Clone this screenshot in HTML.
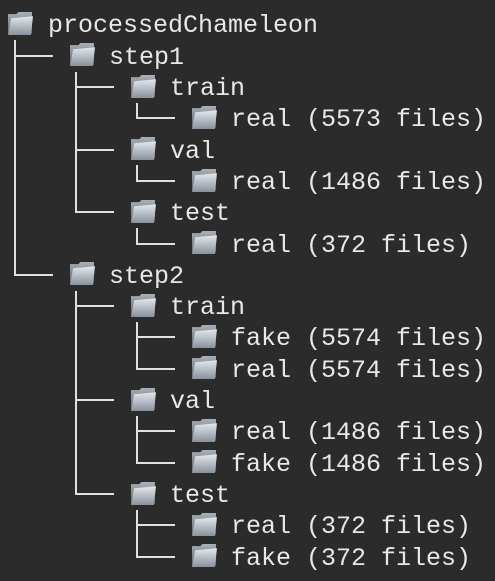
<!DOCTYPE html>
<html><head><meta charset="utf-8"><style>
html,body{margin:0;padding:0;background:#2b2b2b;width:495px;height:581px;overflow:hidden;position:relative}
.t{position:absolute;height:31px;line-height:31px;font-family:"Liberation Mono","DejaVu Sans Mono",monospace;font-size:25px;color:#e8e8e8;white-space:pre;margin-top:2px}
.i{position:absolute;width:25px;height:23px}
.v{position:absolute;width:2px;background:#e0e0e0}
.h{position:absolute;height:2px;background:#e0e0e0}
</style></head><body>
<svg width="0" height="0" style="position:absolute"><defs>
<linearGradient id="g" x1="0" y1="0" x2="0" y2="1"><stop offset="0" stop-color="#e4e8ec"/><stop offset="1" stop-color="#8a929c"/></linearGradient>
<linearGradient id="b" x1="0" y1="0" x2="0" y2="1"><stop offset="0" stop-color="#a9b0b8"/><stop offset="1" stop-color="#5d646c"/></linearGradient>
<symbol id="f" viewBox="0 0 24 22"><path d="M0 2 L8 2 L10 0 L23 0 L23 21 L0 21 Z" fill="url(#b)"/><path d="M3 6 L24 4 L22 22 L0 22 Z" fill="url(#g)"/></symbol>
</defs></svg>

<div class="v" style="left:14px;top:40px;height:235px"></div>
<div class="v" style="left:75px;top:72px;height:141px"></div>
<div class="v" style="left:75px;top:291px;height:203px"></div>
<div class="v" style="left:136px;top:103px;height:16px"></div>
<div class="v" style="left:136px;top:165px;height:16px"></div>
<div class="v" style="left:136px;top:228px;height:16px"></div>
<div class="v" style="left:136px;top:322px;height:47px"></div>
<div class="v" style="left:136px;top:416px;height:47px"></div>
<div class="v" style="left:136px;top:510px;height:47px"></div>
<div class="h" style="left:14px;top:55px;width:39px"></div>
<div class="h" style="left:14px;top:274px;width:39px"></div>
<div class="h" style="left:75px;top:86px;width:39px"></div>
<div class="h" style="left:75px;top:149px;width:39px"></div>
<div class="h" style="left:75px;top:211px;width:39px"></div>
<div class="h" style="left:75px;top:305px;width:39px"></div>
<div class="h" style="left:75px;top:399px;width:39px"></div>
<div class="h" style="left:75px;top:493px;width:39px"></div>
<div class="h" style="left:136px;top:117px;width:39px"></div>
<div class="h" style="left:136px;top:180px;width:39px"></div>
<div class="h" style="left:136px;top:243px;width:39px"></div>
<div class="h" style="left:136px;top:336px;width:39px"></div>
<div class="h" style="left:136px;top:368px;width:39px"></div>
<div class="h" style="left:136px;top:430px;width:39px"></div>
<div class="h" style="left:136px;top:462px;width:39px"></div>
<div class="h" style="left:136px;top:524px;width:39px"></div>
<div class="h" style="left:136px;top:556px;width:39px"></div>

<svg class="i" style="left:8px;top:12px"><use href="#f"/></svg>
<svg class="i" style="left:70px;top:43px"><use href="#f"/></svg>
<svg class="i" style="left:131px;top:75px"><use href="#f"/></svg>
<svg class="i" style="left:192px;top:106px"><use href="#f"/></svg>
<svg class="i" style="left:131px;top:137px"><use href="#f"/></svg>
<svg class="i" style="left:192px;top:169px"><use href="#f"/></svg>
<svg class="i" style="left:131px;top:200px"><use href="#f"/></svg>
<svg class="i" style="left:192px;top:231px"><use href="#f"/></svg>
<svg class="i" style="left:70px;top:262px"><use href="#f"/></svg>
<svg class="i" style="left:131px;top:294px"><use href="#f"/></svg>
<svg class="i" style="left:192px;top:325px"><use href="#f"/></svg>
<svg class="i" style="left:192px;top:356px"><use href="#f"/></svg>
<svg class="i" style="left:131px;top:388px"><use href="#f"/></svg>
<svg class="i" style="left:192px;top:419px"><use href="#f"/></svg>
<svg class="i" style="left:192px;top:450px"><use href="#f"/></svg>
<svg class="i" style="left:131px;top:482px"><use href="#f"/></svg>
<svg class="i" style="left:192px;top:513px"><use href="#f"/></svg>
<svg class="i" style="left:192px;top:544px"><use href="#f"/></svg>

<div class="t" style="left:48px;top:8px">processedChameleon</div>
<div class="t" style="left:109px;top:40px">step1</div>
<div class="t" style="left:170px;top:71px">train</div>
<div class="t" style="left:231px;top:102px">real (5573 files)</div>
<div class="t" style="left:170px;top:134px">val</div>
<div class="t" style="left:231px;top:165px">real (1486 files)</div>
<div class="t" style="left:170px;top:196px">test</div>
<div class="t" style="left:231px;top:228px">real (372 files)</div>
<div class="t" style="left:109px;top:259px">step2</div>
<div class="t" style="left:170px;top:290px">train</div>
<div class="t" style="left:231px;top:321px">fake (5574 files)</div>
<div class="t" style="left:231px;top:353px">real (5574 files)</div>
<div class="t" style="left:170px;top:384px">val</div>
<div class="t" style="left:231px;top:415px">real (1486 files)</div>
<div class="t" style="left:231px;top:447px">fake (1486 files)</div>
<div class="t" style="left:170px;top:478px">test</div>
<div class="t" style="left:231px;top:509px">real (372 files)</div>
<div class="t" style="left:231px;top:541px">fake (372 files)</div>
</body></html>
